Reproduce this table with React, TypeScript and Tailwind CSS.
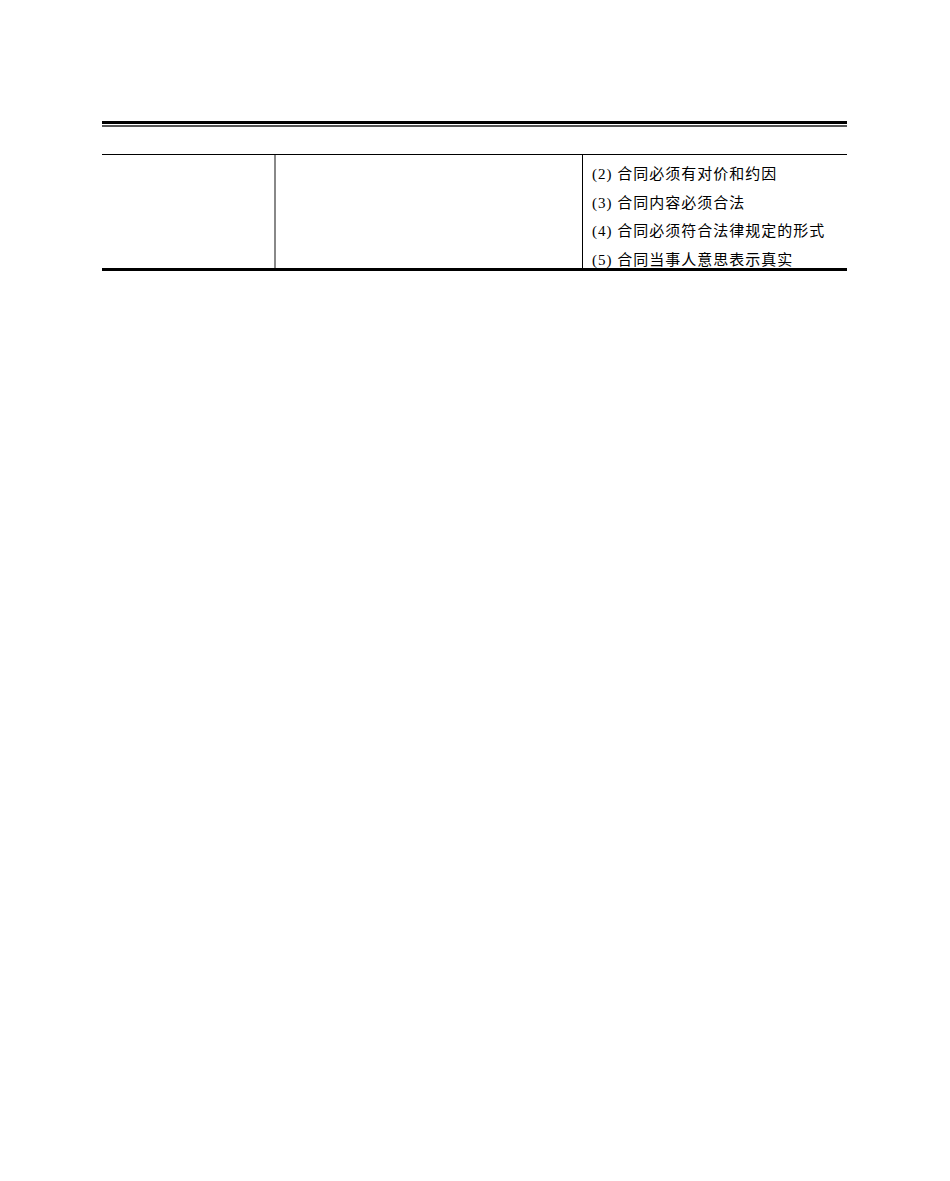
import React from "react";

const rows = [
  "(2) 合同必须有对价和约因",
  "(3) 合同内容必须合法",
  "(4) 合同必须符合法律规定的形式",
  "(5) 合同当事人意思表示真实",
];

export default function App() {
  return (
    <div
      className="w-[950px] h-[1181px] bg-white text-black"
      style={{ fontFamily: '"Liberation Serif", "Noto Sans CJK SC", serif' }}
    >
      <div className="ml-[102px] w-[745px] pt-[121px]">
        <div className="h-[3px] bg-black" />
        <div className="mt-[1px] h-[2px] bg-[#555555]" />
        <div className="h-[27px]" />
        <div className="flex h-[117px] border-t border-black border-b-[3px]">
          <div className="w-[172px]" />
          <div className="w-[308px] border-l-2 border-[#888888]" />
          <div className="flex-1 border-l border-black pl-[9px] pt-[5px]">
            {rows.map((r) => (
              <div
                key={r}
                className="h-[28.5px] leading-[28.5px] text-[15px] tracking-[1px] whitespace-nowrap"
              >
                {r}
              </div>
            ))}
          </div>
        </div>
      </div>
    </div>
  );
}
